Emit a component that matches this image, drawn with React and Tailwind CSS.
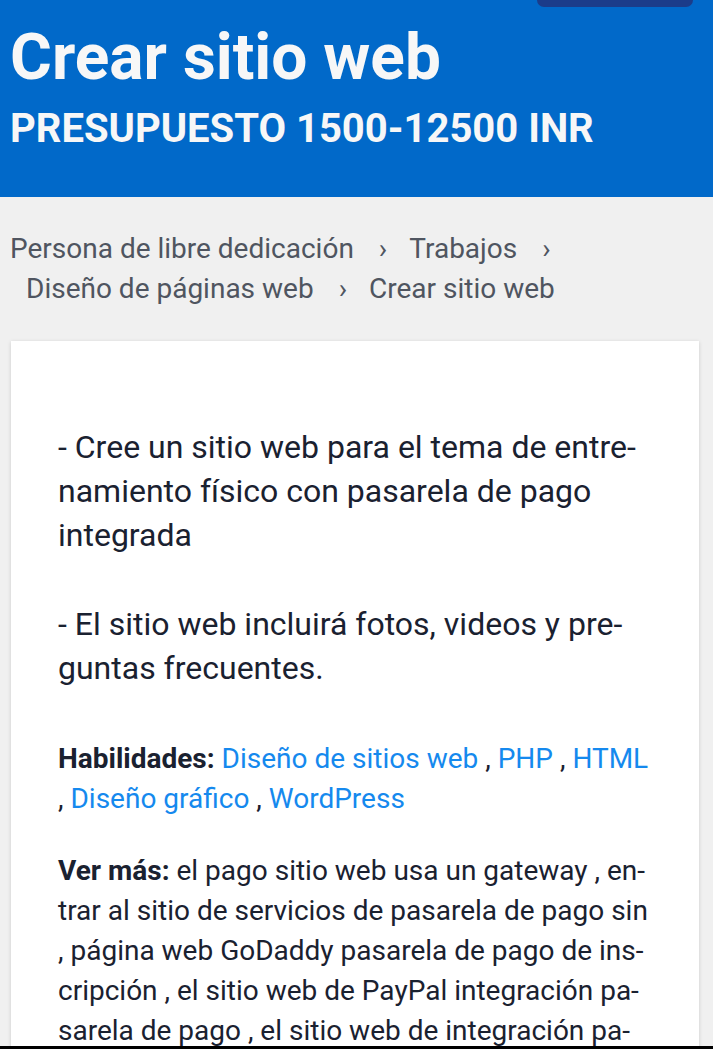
import React from 'react';

// Página de detalle de un trabajo (vista móvil)
const crumbs = ['Persona de libre dedicación', 'Trabajos', 'Diseño de páginas web', 'Crear sitio web'];

const Header = () => (
  <div className="bg-[#0169c9] px-[10px] pb-[48px]">
    <div className="flex justify-end pr-[10px]">
      <div className="h-[7px] w-[156px] rounded-b-[14px] bg-[#1b3c8a]" />
    </div>
    <h1 className="mt-[19px] text-[64px] font-bold leading-none text-[#f7f7f7]">Crear sitio web</h1>
    <h2 className="mt-[19px] text-[40px] font-bold leading-none text-[#f7f7f7]">PRESUPUESTO 1500-12500 INR</h2>
  </div>
);

const Breadcrumb = () => (
  <nav className="flex flex-wrap px-[10px] py-8 text-[28px] leading-[40px] text-[#4f5560]">
    {crumbs.map((c, i) => (
      <React.Fragment key={c}>
        <span className={i > 0 ? 'pl-4' : ''}>{c}</span>
        {i < crumbs.length - 1 && <span className="ml-[25px] mr-[6px]">›</span>}
      </React.Fragment>
    ))}
  </nav>
);

const Link = ({ children }) => <a href="#" className="text-[#1589ee]">{children}</a>;

export default function App() {
  return (
    <div className="min-h-screen bg-[#f0f0f0] font-['Roboto',sans-serif]">
      <Header />
      <Breadcrumb />
      <div className="ml-[11px] mr-[14px] bg-white pl-[47px] pr-[30px] pt-[84px] pb-10 text-[28px] text-[#1a2130] shadow-[0_1px_4px_rgba(0,0,0,0.15)]">
        <p className="text-[32px] leading-[44px]">
          - Cree un sitio web para el tema de entre-<br />
          namiento físico con pasarela de pago<br />
          integrada
        </p>
        <p className="mt-[45px] text-[32px] leading-[44px]">
          - El sitio web incluirá fotos, videos y pre-<br />
          guntas frecuentes.
        </p>
        <p className="mt-[49px] leading-[40px]">
          <b className="font-bold">Habilidades:</b> <Link>Diseño de sitios web</Link> , <Link>PHP</Link> , <Link>HTML</Link><br />
          , <Link>Diseño gráfico</Link> , <Link>WordPress</Link>
        </p>
        <p className="mt-[32px] leading-[40px]">
          <b className="font-bold">Ver más:</b> el pago sitio web usa un gateway , en-<br />
          trar al sitio de servicios de pasarela de pago sin<br />
          , página web GoDaddy pasarela de pago de ins-<br />
          cripción , el sitio web de PayPal integración pa-<br />
          sarela de pago , el sitio web de integración pa-<br />
          sarela de pago con tarjeta de crédito , crear<br />
          sitio web con pasarela de pago
        </p>
      </div>
      <div className="fixed bottom-0 left-0 h-[3px] w-full bg-black" />
    </div>
  );
}
